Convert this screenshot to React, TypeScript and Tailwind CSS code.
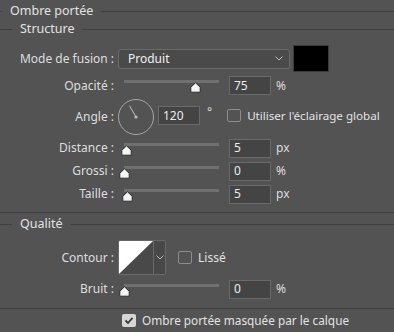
import React from 'react';

const font = { fontFamily: '"Noto Sans", "Open Sans", sans-serif' };

const Line = ({ className = '' }: { className?: string }) => (
  <div className={`h-px bg-[#3e3e3e] ${className}`} />
);

const Section = ({ title, lead, className = '' }: { title: string; lead: string; className?: string }) => (
  <div className={`flex items-center ${className}`}>
    <Line className={lead} />
    <span className="px-[8px] text-[12.5px] text-[#e2e2e2] leading-none">{title}</span>
    <Line className="flex-1" />
  </div>
);

const Label = ({ children }: { children: React.ReactNode }) => (
  <div className="w-[114px] shrink-0 text-right text-[12px] text-[#dedede] leading-none">{children}</div>
);

const Thumb = () => (
  <svg width="11" height="11" viewBox="0 0 11 11">
    <path d="M5.5 0.8 L10.2 5.2 L10.2 10.2 L0.8 10.2 L0.8 5.2 Z" fill="#f4f4f4" stroke="#2b2b2b" strokeWidth="1" strokeLinejoin="round" />
  </svg>
);

// piste de curseur : 124 -> 219
const Slider = ({ pos }: { pos: number }) => (
  <div className="relative w-[107px] h-full shrink-0">
    <div className="absolute left-[6px] right-[6px] top-[4px] h-[3px] bg-[#707070]" />
    <div className="absolute top-[6px]" style={{ left: 6 + pos * 95 - 5.5 }}>
      <Thumb />
    </div>
  </div>
);

const Field = ({ value, w = 'w-[42px]' }: { value: string; w?: string }) => (
  <div className={`${w} h-[19px] shrink-0 bg-[#444444] border border-[#6a6a6a] pl-[4px] flex items-center text-[12px] text-[#ececec] leading-none`}>
    {value}
  </div>
);

const Unit = ({ children }: { children: React.ReactNode }) => (
  <span className="ml-[5px] text-[12px] text-[#dedede] leading-none">{children}</span>
);

const Check = ({ checked = false }: { checked?: boolean }) =>
  checked ? (
    <div className="w-[14px] h-[13px] rounded-[2px] bg-[#d6d6d6] flex items-center justify-center shrink-0">
      <svg width="10" height="9" viewBox="0 0 10 9">
        <path d="M1.5 4.5 L4 7 L8.5 1.8" fill="none" stroke="#3a3a3a" strokeWidth="1.8" />
      </svg>
    </div>
  ) : (
    <div className="w-[14px] h-[13px] rounded-[2px] border border-[#8c8c8c] shrink-0" />
  );

const Chevron = () => (
  <svg width="8" height="5" viewBox="0 0 8 5">
    <path d="M0.5 0.5 L4 4 L7.5 0.5" fill="none" stroke="#bdbdbd" strokeWidth="1" />
  </svg>
);

const SliderRow = ({ label, pos, value, unit, className = '' }: { label: string; pos: number; value: string; unit: string; className?: string }) => (
  <div className={`flex items-center h-[18px] ${className}`}>
    <Label>{label}</Label>
    <div className="ml-[4px] h-full flex items-center">
      <Slider pos={pos} />
      <div className="ml-[4px]"><Field value={value} /></div>
      <Unit>{unit}</Unit>
    </div>
  </div>
);

export default function App() {
  return (
    <div className="w-[394px] h-[332px] bg-[#535353] flex flex-col overflow-hidden" style={font}>
      <Section title="Ombre portée" lead="w-[2px]" className="h-[24px]" />
      <Section title="Structure" lead="w-[12px]" className="h-[14px]" />

      {/* Mode de fusion */}
      <div className="flex items-center h-[27px] mt-[9px]">
        <Label>Mode de fusion :</Label>
        <div className="ml-[4px] w-[172px] h-[20px] rounded-[3px] bg-[#4a4a4a] border border-[#6a6a6a] flex items-center justify-between pl-[9px] pr-[6px]">
          <span className="text-[12px] text-[#f0f0f0] leading-none">Produit</span>
          <Chevron />
        </div>
        <div className="ml-[3px] w-[36px] h-[27px] bg-black border border-[#3a3a3a]" />
      </div>

      {/* Opacité */}
      <div className="flex items-center h-[19px] mt-[4px]">
        <Label>Opacité :</Label>
        <div className="ml-[4px] h-full flex items-center">
          <Slider pos={0.75} />
          <div className="ml-[4px]"><Field value="75" /></div>
          <Unit>%</Unit>
        </div>
      </div>

      {/* Angle */}
      <div className="flex items-center h-[36px] mt-[4px]">
        <Label>Angle :</Label>
        <svg className="ml-[4px] shrink-0" width="36" height="36" viewBox="0 0 36 36">
          <circle cx="18" cy="18" r="17.5" fill="none" stroke="#a8a8a8" strokeWidth="1" />
          <line x1="18" y1="18" x2="11.5" y2="6.7" stroke="#bdbdbd" strokeWidth="1" />
          <circle cx="18" cy="18" r="1.6" fill="#bdbdbd" />
        </svg>
        <div className="ml-[4px] -mt-[3px]"><Field value="120" /></div>
        <span className="ml-[7px] -mt-[10px] text-[12px] text-[#dedede] leading-none">°</span>
        <div className="ml-[15px] -mt-[3px] flex items-center">
          <Check />
          <span className="ml-[6px] text-[11.6px] text-[#e2e2e2] leading-none">Utiliser l'éclairage global</span>
        </div>
      </div>

      <SliderRow label="Distance :" pos={0.03} value="5" unit="px" className="mt-[4px]" />
      <SliderRow label="Grossi :" pos={0} value="0" unit="%" className="mt-[5px]" />
      <SliderRow label="Taille :" pos={0.04} value="5" unit="px" className="mt-[5px]" />

      <Line className="mt-[9px] w-full" />
      <Section title="Qualité" lead="w-[12px]" className="h-[24px]" />

      {/* Contour */}
      <div className="flex items-center h-[35px] mt-[4px]">
        <Label>Contour :</Label>
        <div className="ml-[4px] h-[35px] w-[48px] flex border border-[#6a6a6a] rounded-[2px] overflow-hidden">
          <svg width="34" height="33" viewBox="0 0 34 33" className="shrink-0">
            <rect width="34" height="33" fill="#494949" />
            <path d="M0 0 L34 0 L0 33 Z" fill="#ffffff" />
          </svg>
          <div className="flex-1 border-l border-[#6a6a6a] bg-[#484848] flex items-center justify-center">
            <Chevron />
          </div>
        </div>
        <div className="ml-[12px] flex items-center">
          <Check />
          <span className="ml-[6px] text-[12px] text-[#e2e2e2] leading-none">Lissé</span>
        </div>
      </div>

      <SliderRow label="Bruit :" pos={0} value="0" unit="%" className="mt-[5px]" />

      <Line className="mt-[10px] w-full" />
      <div className="flex items-center h-[24px] pl-[122px]">
        <Check checked />
        <span className="ml-[6px] text-[11.8px] text-[#e2e2e2] leading-none">Ombre portée masquée par le calque</span>
      </div>
    </div>
  );
}
